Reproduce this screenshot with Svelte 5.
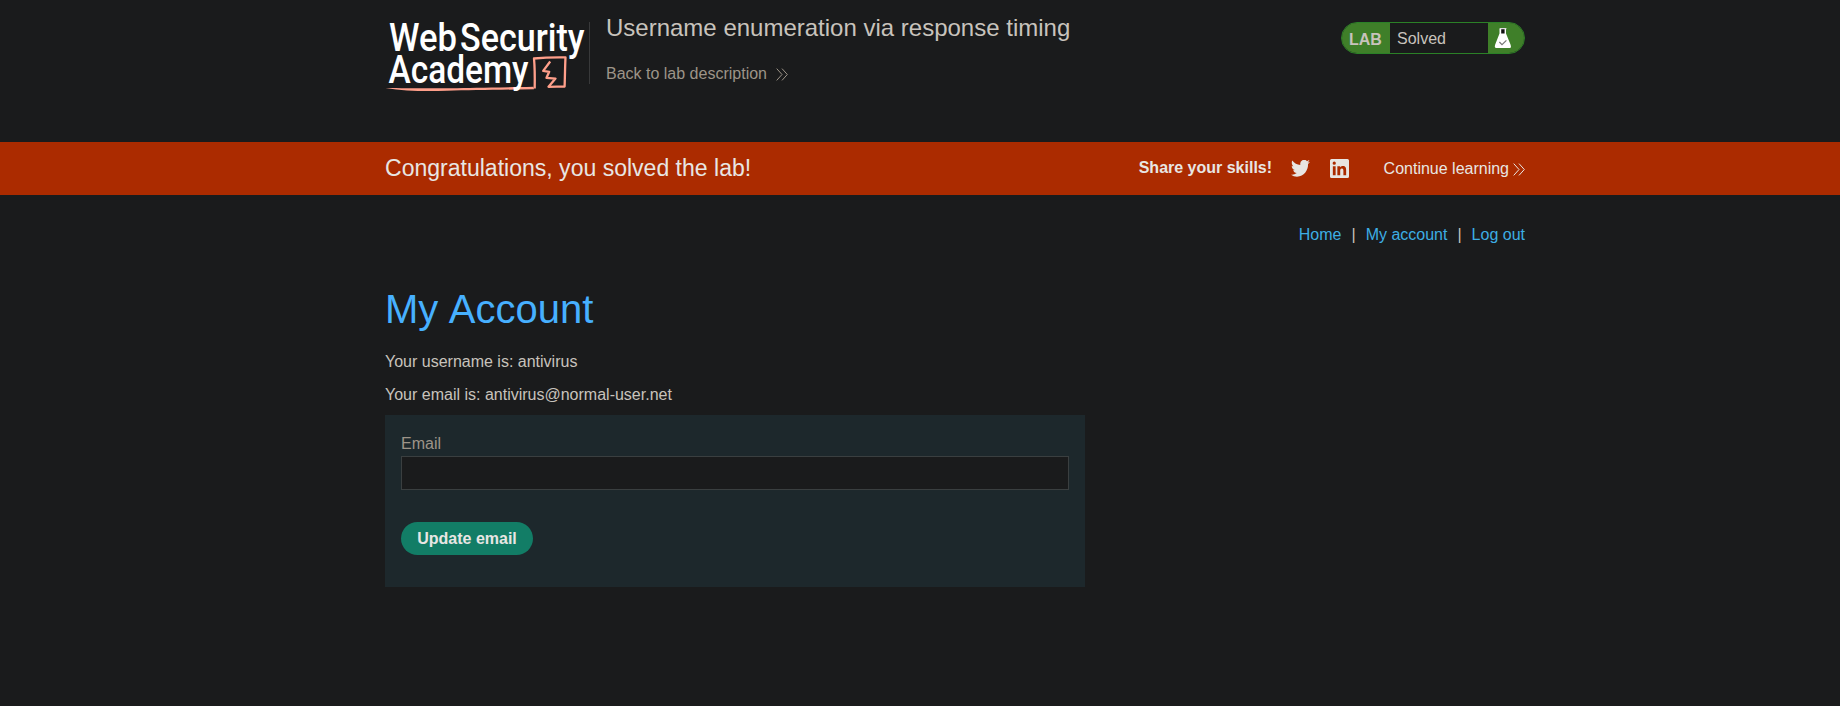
<script>
  let email = $state('');
  const links = ['Home', 'My account', 'Log out'];
</script>

{#snippet chevrons()}
  <svg class="chevrons" width="13" height="13" viewBox="0 0 13 13" aria-hidden="true">
    <path d="M1.7 .6 7 6.5 1.7 12.4M7 .6 12.3 6.5 7 12.4" />
  </svg>
{/snippet}

<header>
  <div class="container head">
    <div class="brand">
      <svg class="logo" width="204" height="62" viewBox="0 -6 204 62" role="img" aria-label="Web Security Academy">
        <path class="line" d="M.5 60 C18 60.1 45 60.6 66 60.2 S105 59.5 148.5 58.7 L149 61.2 C115 61.8 86 62.2 62 62.8 S20 63.1 .5 60Z" />
        <path class="frame" d="M149.7 60.5 C149.9 49 149.8 39 149 30.5 C159 29.5 169 29.2 180.5 29.4 C180 39 180 48 179.6 58.5 C174 58.7 169 58.6 163.5 58.8 L170.5 50.6 L161.5 49.8 L164.2 43.8 L158.2 42.9 L165.2 33.5" />
        <g class="word">
          <text x="4" y="22.7" textLength="68" lengthAdjust="spacingAndGlyphs">Web</text>
          <text x="75" y="22.7" textLength="124.5" lengthAdjust="spacingAndGlyphs">Security</text>
          <text x="3.5" y="55" textLength="140" lengthAdjust="spacingAndGlyphs">Academy</text>
        </g>
      </svg>
    </div>
    <div class="title">
      <h2>Username enumeration via response timing</h2>
      <a class="back" href="#lab">Back to lab description {@render chevrons()}</a>
    </div>
    <div class="status">
      <span class="lab">LAB</span>
      <span class="solved">Solved</span>
      <span class="flask">
        <svg width="18" height="20" viewBox="0 0 18 20" aria-hidden="true">
          <path fill="#fff" d="M5.5 1H12V5.6L16.6 16.8Q17.6 20 15.8 20H2.2Q.2 20 1.1 16.8L5.5 5.6Z" />
          <path fill="#111" d="M7.2 1h3.4v4.6H7.2z" />
          <path fill="#ddd" d="M5.6 0h6.8v1.2H5.6z" />
          <path fill="none" stroke="#777" stroke-width="1.2" d="m5.4 14 2.6 2.6 4.4-4.2" />
        </svg>
      </span>
    </div>
  </div>
</header>

<section class="banner">
  <div class="container row">
    <h4>Congratulations, you solved the lab!</h4>
    <strong>Share your skills!</strong>
    <svg class="twitter" width="19" height="17" viewBox="0 2.5 24 19.6" preserveAspectRatio="none" aria-hidden="true">
      <path d="M23.95 4.57a10 10 0 0 1-2.82.77 4.96 4.96 0 0 0 2.16-2.72c-.95.55-2 .95-3.13 1.18a4.92 4.92 0 0 0-8.38 4.48C7.69 8.1 4.07 6.13 1.64 3.16a4.82 4.82 0 0 0-.67 2.48c0 1.71.87 3.21 2.19 4.1a4.9 4.9 0 0 1-2.23-.62v.06a4.92 4.92 0 0 0 3.95 4.83 5 5 0 0 1-2.21.08 4.94 4.94 0 0 0 4.6 3.42A9.87 9.87 0 0 1 0 19.54a13.99 13.99 0 0 0 7.55 2.21c9.05 0 14-7.5 14-13.98 0-.21 0-.42-.02-.63a9.94 9.94 0 0 0 2.42-2.57z" />
    </svg>
    <svg class="linkedin" width="19" height="19" viewBox="0 0 24 24" aria-hidden="true">
      <path fill-rule="evenodd" d="M2 0H22Q24 0 24 2V22Q24 24 22 24H2Q0 24 0 22V2Q0 0 2 0ZM3.6 9V20.4H7.1V9ZM5.35 3.3A2.05 2.05 0 1 0 5.35 7.4 2.05 2.05 0 1 0 5.35 3.3ZM9.3 9V20.4H12.9V14.8C12.9 13.3 13.2 11.9 15 11.9S16.9 13.6 16.9 14.9V20.4H20.4V14.1C20.4 11 19.7 8.7 16.2 8.7 14.5 8.7 13.4 9.6 12.9 10.5V9Z" />
    </svg>
    <a class="continue" href="#next">Continue learning {@render chevrons()}</a>
  </div>
</section>

<main class="container">
  <nav>
    {#each links as link, i}
      {#if i > 0}<span>|</span>{/if}
      <a href="#{link}">{link}</a>
    {/each}
  </nav>
  <h1>My Account</h1>
  <p>Your username is: antivirus</p>
  <p>Your email is: antivirus@normal-user.net</p>
  <form onsubmit={(e) => e.preventDefault()}>
    <label for="email">Email</label>
    <input id="email" type="email" bind:value={email} />
    <button type="submit">Update email</button>
  </form>
</main>

<style>
  :global(body) {
    background: #1a1b1c;
    color: #c8c3bc;
    font: 16px/20px "Liberation Sans", Arial, sans-serif;
  }
  h1, h2, h4, p { margin: 0; font-weight: 400; }
  a { text-decoration: none; }
  .container { width: 1140px; margin: 0 0 0 385px; }
  .chevrons { fill: none; stroke: currentColor; stroke-width: 1; }
  .head { display: flex; align-items: flex-start; height: 142px; }
  .brand { flex: none; width: 204px; height: 62px; margin-top: 22px; border-right: 1px solid #38393a; }
  .logo { display: block; overflow: visible; }
  .word { fill: #fff; font: 500 38px Roboto, sans-serif; }
  .line { fill: #ff9f8a; }
  .frame { fill: none; stroke: #ff9f8a; stroke-width: 2.3; stroke-linejoin: round; }
  .title { padding: 14px 0 0 16px; flex: 1; }
  h2 { font-size: 24px; line-height: 28px; }
  .back { display: flex; align-items: center; gap: 8px; margin-top: 22px; color: #9d9488; }
  .status {
    box-sizing: border-box;
    display: flex;
    width: 184px;
    height: 32px;
    margin-top: 22px;
    border: 1px solid #2b8127;
    border-radius: 16px;
    overflow: hidden;
    line-height: 32px;
  }
  .lab { width: 41px; padding-left: 7px; background: #3f7f29; font-weight: 700; line-height: 34px; }
  .solved { flex: 1; padding-left: 7px; }
  .flask { width: 30px; padding: 5px 0 0 6px; background: #3f7f29; line-height: 0; }
  .banner { height: 53px; background: #ab2b00; color: #e8e6e3; }
  .row { display: flex; align-items: center; height: 53px; }
  .row svg { fill: currentColor; flex: none; }
  h4 { flex: 1; margin-bottom: 2px; font-size: 23.04px; line-height: 28px; }
  strong { margin-bottom: 2px; }
  .twitter { margin: 0 0 1px 18.5px; }
  .linkedin { margin-left: 20px; }
  .continue { display: flex; align-items: center; gap: 3px; margin: 1px 0 0 35px; color: inherit; }
  .row .continue :global(svg) { fill: none; }
  nav { display: flex; justify-content: flex-end; gap: 10px; padding-top: 30px; }
  nav a { color: #3daee4; }
  h1 { margin-top: 41px; font-size: 40px; line-height: 46px; word-spacing: 1.6px; color: #47b0ff; }
  p { margin-top: 20px; height: 20px; }
  p + p { margin-top: 13px; }
  form { box-sizing: border-box; width: 700px; height: 172px; margin-top: 10px; padding: 19px 16px; background: #1d282c; }
  label { display: block; height: 22px; color: #9d9488; }
  input {
    display: block;
    box-sizing: border-box;
    width: 668px;
    height: 34px;
    padding: 0 8px;
    border: 1px solid #3a3f40;
    background: #1a1b1c;
    color: inherit;
    font: inherit;
    outline: 0;
  }
  button {
    display: block;
    width: 132px;
    height: 33px;
    margin-top: 32px;
    padding: 0;
    border: 0;
    border-radius: 17px;
    background: #127d66;
    color: #e8e6e3;
    font: 700 16px "Liberation Sans", Arial, sans-serif;
  }
</style>
